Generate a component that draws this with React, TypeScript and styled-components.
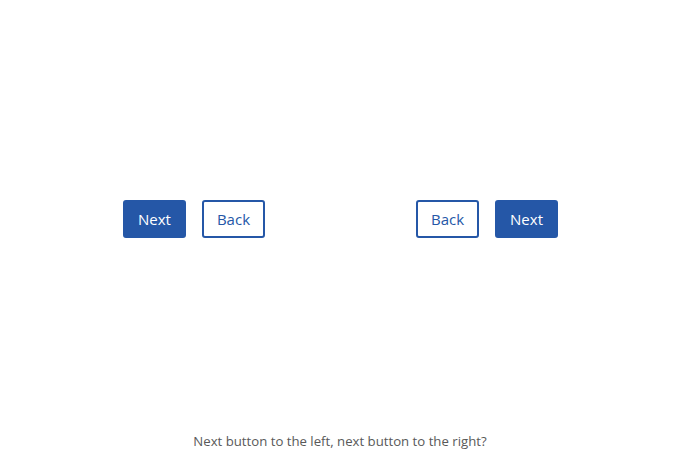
import React from "react";
import styled, { createGlobalStyle } from "styled-components";

const GlobalStyle = createGlobalStyle`
  html, body {
    margin: 0;
    padding: 0;
    background: #ffffff;
    font-family: "Open Sans", "Noto Sans", Arial, sans-serif;
  }
`;

const Page = styled.div`
  width: 680px;
  height: 453px;
  display: flex;
  flex-direction: column;
  box-sizing: border-box;
`;

const Stage = styled.div`
  flex: 1;
  display: flex;
  align-items: center;
  justify-content: space-between;
  padding: 6px 122px 0 123px;
`;

const Group = styled.div`
  display: flex;
  gap: 16px;
`;

const Button = styled.button<{ $primary?: boolean }>`
  box-sizing: border-box;
  height: 38px;
  padding: 0 13px;
  border-radius: 3px;
  border: 2px solid #2557a7;
  background: ${(p) => (p.$primary ? "#2557a7" : "#ffffff")};
  color: ${(p) => (p.$primary ? "#ffffff" : "#2557a7")};
  font-family: "Open Sans", "Noto Sans", Arial, sans-serif;
  font-size: 15px;
  cursor: pointer;
`;

const Caption = styled.p`
  margin: 0;
  padding: 0 0 3px;
  text-align: center;
  font-size: 13.2px;
  color: #595959;
`;

export default function App() {
  return (
    <>
      <GlobalStyle />
      <Page>
        <Stage>
          <Group>
            <Button $primary>Next</Button>
            <Button>Back</Button>
          </Group>
          <Group>
            <Button>Back</Button>
            <Button $primary>Next</Button>
          </Group>
        </Stage>
        <Caption>Next button to the left, next button to the right?</Caption>
      </Page>
    </>
  );
}
